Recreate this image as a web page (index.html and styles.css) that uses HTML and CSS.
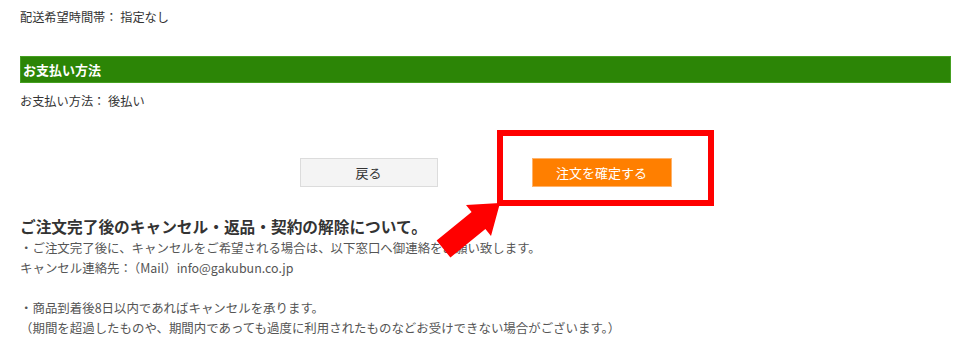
FILE: index.html
```html
<!DOCTYPE html>
<html lang="ja">
<head>
<meta charset="utf-8">
<link rel="stylesheet" href="styles.css">
</head>
<body>
<div class="page">
  <p class="info first">配送希望時間帯： 指定なし</p>
  <h2 class="bar">お支払い方法</h2>
  <p class="info">お支払い方法： 後払い</p>
  <div class="actions">
    <button class="btn back">戻る</button>
    <button class="btn confirm">注文を確定する</button>
  </div>
  <h3 class="notice-title">ご注文完了後のキャンセル・返品・契約の解除について。</h3>
  <div class="notice">
    <p>・ご注文完了後に、キャンセルをご希望される場合は、以下窓口へ御連絡をお願い致します。</p>
    <p>キャンセル連絡先：<span class="mail">（Mail）info@gakubun.co.jp</span></p>
    <p class="spacer">&nbsp;</p>
    <p>・商品到着後8日以内であればキャンセルを承ります。</p>
    <p>（期間を超過したものや、期間内であっても過度に利用されたものなどお受けできない場合がございます。）</p>
  </div>
</div>
<div class="highlight"></div>
<svg class="arrow" width="973" height="348" viewBox="0 0 973 348">
  <polygon points="500,203 491,236 485.4,229 450.4,257.5 436.6,240.5 471.6,212 466,205" fill="#ff0000"/>
</svg>
</body>
</html>
```
FILE: styles.css
```css
html, body {
  margin: 0;
  padding: 0;
  background: #fff;
}
body {
  font-family: "Noto Sans CJK JP", "Noto Sans", sans-serif;
  color: #333;
  width: 973px;
  height: 348px;
  overflow: hidden;
  position: relative;
}
.page {
  padding: 7px 22px 0 20px;
}
p { margin: 0; }
.info {
  font-size: 12.2px;
  line-height: 20px;
  color: #333;
}
.bar {
  margin: 29px 0 8px;
  height: 27px;
  box-sizing: border-box;
  background: #2c8506;
  border: 1px solid #45a021;
  color: #fff;
  font-size: 13px;
  font-weight: 700;
  line-height: 25px;
  padding-left: 2px;
}
.actions {
  display: flex;
  justify-content: center;
  gap: 94px;
  margin-top: 47px;
}
.btn {
  font-family: inherit;
  font-size: 13px;
  height: 29px;
  box-sizing: border-box;
  padding: 0;
  cursor: pointer;
}
.back {
  width: 138px;
  background: #f4f4f4;
  border: 1px solid #dcdcdc;
  color: #333;
}
.confirm {
  width: 140px;
  background: #ff7f00;
  border: 1px solid #ffb36b;
  color: #fff;
}
.notice-title {
  margin: 29px 0 0;
  font-size: 15.7px;
  line-height: 22px;
  font-weight: 700;
  color: #333;
}
.notice {
  font-size: 12.45px;
  line-height: 20px;
  color: #555;
}
.mail {
  margin-left: 2px;
}
.highlight {
  position: absolute;
  left: 497px;
  top: 130px;
  width: 217px;
  height: 76px;
  box-sizing: border-box;
  border: 6px solid #ff0000;
}
.arrow {
  position: absolute;
  left: 0;
  top: 0;
}
```
